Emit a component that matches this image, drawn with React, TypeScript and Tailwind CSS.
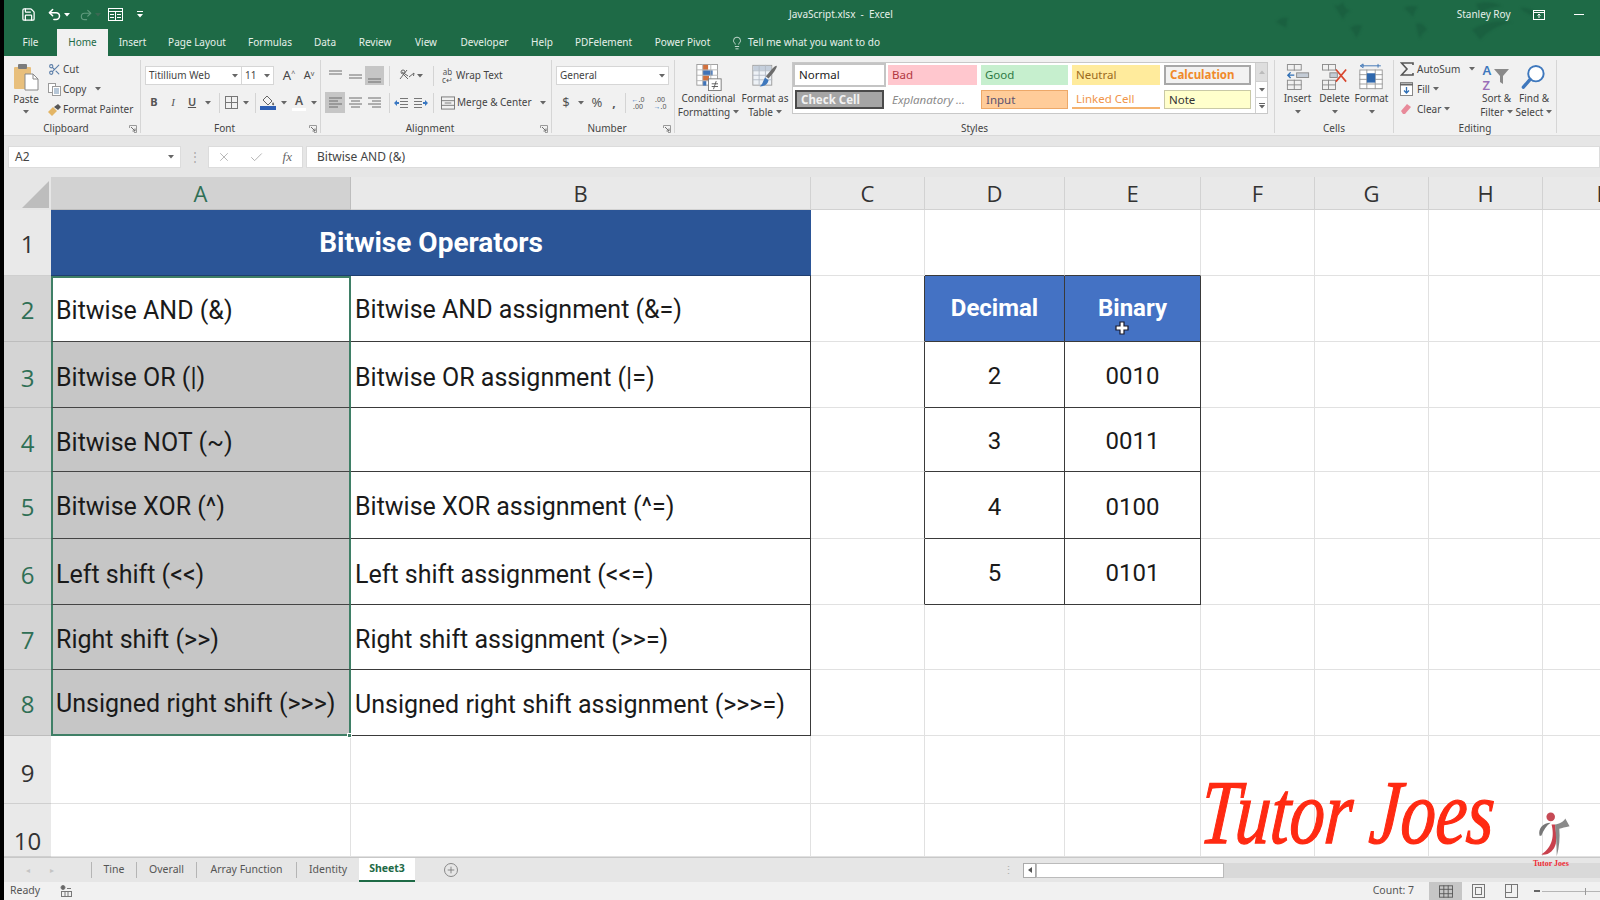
import React from "react";
import { Save, Undo2, Redo2, Scissors, Lightbulb, X, Check, Plus } from "lucide-react";

const Caret = ({ className = "" }: { className?: string }) => (
  <svg width="6" height="4" viewBox="0 0 6 4" className={`shrink-0 ${className}`}><path d="M0 0h6L3 3.5z" fill="#666" /></svg>
);

const Lines = ({ kind, w = 13 }: { kind: "l" | "c" | "r" | "t" | "m" | "b"; w?: number }) => {
  const ys = kind === "t" ? [2, 5] : kind === "m" ? [6, 9] : kind === "b" ? [10, 13] : [2, 5, 8, 11];
  return (
    <svg width={w} height="14" viewBox="0 0 13 14">
      {ys.map((y, i) => {
        const short = i % 2 === 1 && ys.length === 4;
        const x1 = kind === "r" && short ? 4 : kind === "c" && short ? 2 : 0;
        const x2 = kind === "l" && short ? 9 : kind === "c" && short ? 11 : 13;
        return <line key={y} x1={x1} x2={x2} y1={y} y2={y} stroke="#6d6d6d" strokeWidth="1" />;
      })}
    </svg>
  );
};

const Launcher = () => (
  <svg width="8" height="8" viewBox="0 0 8 8" className="shrink-0"><path d="M.5 3V.5H7.5V7.5H5" fill="none" stroke="#9a9a9a" /><path d="M2 2l4 4M6 3.5V6H3.5" fill="none" stroke="#6f6f6f" /></svg>
);

const Group = ({ w, label, launcher, children }: { w: string; label: string; launcher?: boolean; children: React.ReactNode }) => (
  <div className={`${w} h-[73px] shrink-0 border-r border-[#d6d6d6] flex flex-col`}>
    <div className="h-[63px] shrink-0">{children}</div>
    <div className={`h-[10px] leading-[12px] text-[10px] text-[#444] flex items-center justify-center relative ${launcher ? "pr-[12px]" : ""}`}>
      {label}
      {launcher && <span className="absolute top-[2px] right-[3px]"><Launcher /></span>}
    </div>
  </div>
);

const Sep = ({ className = "" }: { className?: string }) => <div className={`w-px h-[20px] bg-[#d4d4d4] shrink-0 ${className}`} />;

const StyleCell = ({ className, children }: { className: string; children: React.ReactNode }) => (
  <div className={`flex items-center pl-[4px] text-[11.5px] whitespace-nowrap overflow-hidden ${className}`}>{children}</div>
);

const BigButton = ({ w, icon, l1, l2 }: { w: string; icon: React.ReactNode; l1: string; l2?: string }) => (
  <div className={`${w} shrink-0 flex flex-col items-center text-[10px] leading-[14px] text-[#444] pt-[3px]`}>
    <div className="h-[28px] flex items-center justify-center">{icon}</div>
    <div className="whitespace-nowrap">{l1}</div>
    <div className="whitespace-nowrap flex items-center gap-[3px] h-[14px]">{l2}<Caret /></div>
  </div>
);

const TitleLeaves = () => (
  <svg className="absolute left-[1272px] top-0 blur-[1px]" width="290" height="40" viewBox="0 0 290 40" fill="#1a6040">
    <path d="M0 22c4-4 7-5 12-4-2 5-1 7-2 10-3-3-6-3-10-6zM58 5c4 2 6 0 9-3 1 5 4 8 8 9-5 1-7 5-8 9-2-5-5-8-9-15zM74 28c4-3 8-4 12-2-2 4-2 7-6 12-1-4-3-7-6-10zM128 8c3-2 8-3 14-1-3 3-4 6-5 10-3-4-6-6-9-9zM140 24c5-2 8 1 11 6-4 2-6 5-7 9-2-5-3-10-4-15zM200 4c8-3 18-2 26 2-10 1-18 3-22 9-1-4-2-7-4-11zM196 30c12-8 26-10 40-8-14 3-24 9-32 18-2-4-5-7-8-10zM244 8c8-1 14 2 20 8-8 0-14-2-20-8z" />
  </svg>
);

const tabs: [string, string][] = [
  ["File", "w-[53px]"], ["Home", "w-[51px]"], ["Insert", "w-[49px]"], ["Page Layout", "w-[80px]"], ["Formulas", "w-[66px]"], ["Data", "w-[44px]"],
  ["Review", "w-[56px]"], ["View", "w-[46px]"], ["Developer", "w-[71px]"], ["Help", "w-[44px]"], ["PDFelement", "w-[79px]"], ["Power Pivot", "w-[79px]"],
];

const GridIcon = ({ active }: { active?: boolean }) => (
  <svg width="14" height="13" viewBox="0 0 16 14" fill="none" stroke={active ? "#555" : "#777"}><rect x=".5" y=".5" width="15" height="13" /><path d="M5.5 0v14M10.5 0v14M0 4.5h16M0 9.5h16" /></svg>
);

const TitleBar = () => (
  <div className="h-[56px] shrink-0 bg-[#1e6a46] relative text-[#e6f0ea]">
    <TitleLeaves />
    <div className="h-[29px] flex items-center relative">
      <div className="w-[17px]" />
      <Save size={15} strokeWidth={2} className="text-white" />
      <div className="w-[11px]" />
      <Undo2 size={15} strokeWidth={2.4} className="text-white" />
      <Caret className="ml-[2px] brightness-[3]" />
      <div className="w-[9px]" />
      <Redo2 size={14} className="text-[#5f9a7d]" />
      <Caret className="ml-[2px] opacity-40" />
      <div className="w-[7px]" />
      <svg width="15" height="13" viewBox="0 0 15 13" fill="none" stroke="#fff"><rect x=".5" y=".5" width="14" height="12" /><path d="M0 3.5h15M7.5 3.5v9M2 6.5h4M2 9.5h4M9 6.5h4M9 9.5h4" /></svg>
      <div className="w-[14px]" />
      <svg width="6" height="7" viewBox="0 0 6 7" fill="#fff"><path d="M0 0h6v1H0zM0 3h6L3 6.5z" /></svg>
      <div className="text-[10px] ml-[646px] whitespace-nowrap">JavaScript.xlsx&nbsp; - &nbsp;Excel</div>
      <div className="text-[10px] ml-[564px] whitespace-nowrap">Stanley Roy</div>
      <svg width="12" height="10" viewBox="0 0 12 10" fill="none" stroke="#fff" className="ml-[22px]"><rect x=".5" y=".5" width="11" height="9" /><path d="M1 2.5h10" /><path d="M6 8V4M4.5 5.5L6 4l1.500 1.500" /></svg>
      <div className="w-[10px] h-px bg-white ml-[29px]" />
    </div>
    <div className="h-[27px] flex items-stretch relative text-[10px]">
      {tabs.map(([t, w]) => (
        <div key={t} className={`${w} flex items-center justify-center ${t === "Home" ? "bg-[#f1f1f1] text-[#1e6a46]" : ""}`}>{t}</div>
      ))}
      <Lightbulb size={14} strokeWidth={1.4} className="self-center ml-[8px]" />
      <div className="self-center ml-[4px] whitespace-nowrap">Tell me what you want to do</div>
    </div>
  </div>
);

const Ribbon = () => (
  <div className="h-[80px] shrink-0 bg-[#f1f1f1] pt-[4px] flex text-[#444] border-b border-[#d9d9d9]">
    {/* Clipboard */}
    <Group w="w-[137px]" label="Clipboard" launcher>
      <div className="flex h-full">
        <div className="w-[44px] flex flex-col items-center text-[10px] leading-[14px] pt-[3px]">
          <svg width="26" height="28" viewBox="0 0 26 28">
            <rect x="1" y="4" width="17" height="22" rx="1" fill="#e8bf7c" />
            <rect x="5" y="1" width="9" height="5" rx="1" fill="#7c7c7c" />
            <path d="M12 11h8l5 5v11H12z" fill="#fff" stroke="#888" />
            <path d="M20 11v5h5" fill="none" stroke="#888" />
          </svg>
          <div className="mt-[1px]">Paste</div>
          <Caret className="mt-[4px]" />
        </div>
        <div className="text-[10px] -mt-[1px]">
          <div className="h-[20px] flex items-center"><span className="w-[15px] flex"><Scissors size={13} className="text-[#5b7ea8]" /></span>Cut</div>
          <div className="h-[20px] flex items-center">
            <span className="w-[15px] flex"><svg width="13" height="13" viewBox="0 0 13 13" fill="#fff" stroke="#9a9a9a"><rect x=".5" y=".5" width="7" height="9" /><rect x="4.500" y="3.500" width="8" height="9" /><path d="M6 6h5M6 8h5M6 10h5" stroke="#6f8fb0" /></svg></span>
            Copy<Caret className="ml-[9px]" />
          </div>
          <div className="h-[20px] flex items-center">
            <span className="w-[15px] flex"><svg width="14" height="13" viewBox="0 0 14 13"><path d="M0 9l5-5 4 4-5 5z" fill="#e3b565" /><path d="M6 4l4-3 3 3-3 3z" fill="#555" /></svg></span>
            Format Painter
          </div>
        </div>
      </div>
    </Group>
    {/* Font */}
    <Group w="w-[180px]" label="Font" launcher>
      <div className="pt-[6px] pl-[4px]">
        <div className="flex items-center h-[19px]">
          <div className="w-[97px] h-[19px] bg-white border border-[#d6d6d6] flex items-center justify-between px-[3px] text-[10px]">Titillium Web<Caret /></div>
          <div className="w-[32px] h-[19px] bg-white border border-l-0 border-[#d6d6d6] flex items-center justify-between px-[3px] text-[10px]">11<Caret /></div>
          <div className="w-[20px] ml-[5px] text-center text-[13px]">A<sup className="text-[7px] text-[#555]">^</sup></div>
          <div className="w-[20px] text-center text-[11px]">A<sup className="text-[7px] text-[#555]">v</sup></div>
        </div>
        <div className="flex items-center h-[21px] mt-[7px] text-[#555]">
          <div className="w-[18px] text-center text-[11px] font-bold">B</div>
          <div className="w-[20px] text-center text-[11px] italic font-['Liberation_Serif',serif]">I</div>
          <div className="w-[18px] text-center text-[11px] underline font-semibold">U</div>
          <div className="w-[14px] flex justify-center"><Caret /></div>
          <Sep className="ml-[4px]" />
          <div className="w-[19px] ml-[2px] flex justify-center"><svg width="13" height="13" viewBox="0 0 13 13" fill="none" stroke="#777"><rect x=".5" y=".5" width="12" height="12" /><path d="M6.500 0v13M0 6.500h13" /></svg></div>
          <div className="w-[10px] flex justify-center"><Caret /></div>
          <Sep className="ml-[4px]" />
          <div className="w-[18px] ml-[3px] flex flex-col items-center">
            <svg width="14" height="11" viewBox="0 0 14 11"><path d="M6 1l5 5-4 4-5-5z" fill="#f4f4f4" stroke="#666" /><path d="M12 7c1 1.500 1.500 2 1 3-1 .5-2 0-2-1z" fill="#666" /></svg>
            <div className="w-[16px] h-[4px] bg-[#2d5fb5]" />
          </div>
          <div className="w-[13px] flex justify-center"><Caret /></div>
          <div className="w-[18px] flex flex-col items-center leading-none">
            <span className="text-[12px] font-semibold leading-[12px]">A</span>
            <div className="w-[14px] h-[3px] bg-white mt-[1px]" />
          </div>
          <div className="w-[12px] flex justify-center"><Caret /></div>
        </div>
      </div>
    </Group>
    {/* Alignment */}
    <Group w="w-[231px]" label="Alignment" launcher>
      <div className="pt-[6px] pl-[4px]">
        <div className="flex items-center h-[19px]">
          <div className="w-[20px] h-[19px] flex items-center justify-center"><Lines kind="t" /></div>
          <div className="w-[20px] h-[19px] flex items-center justify-center"><Lines kind="m" /></div>
          <div className="w-[19px] h-[19px] flex items-center justify-center bg-[#c6c6c6]"><Lines kind="b" /></div>
          <Sep className="ml-[5px]" />
          <div className="w-[22px] ml-[5px] flex justify-center">
            <svg width="17" height="15" viewBox="0 0 17 15" fill="none" stroke="#666"><path d="M2 11L9 2M4 4l6 4M6 7l4 4" /><circle cx="5" cy="4" r="2" /><path d="M11 9l5-4M16 5l-.5 3" /></svg>
          </div>
          <Caret />
          <Sep className="ml-[10px]" />
          <div className="w-[13px] ml-[7px] mr-[2px] text-[8px] leading-[8px] text-center text-[#555]">ab<br />c↵</div>
          <div className="text-[10px] whitespace-nowrap">Wrap Text</div>
        </div>
        <div className="flex items-center h-[21px] mt-[7px]">
          <div className="w-[20px] h-[21px] flex items-center justify-center bg-[#c6c6c6]"><Lines kind="l" /></div>
          <div className="w-[20px] h-[21px] flex items-center justify-center"><Lines kind="c" /></div>
          <div className="w-[19px] h-[21px] flex items-center justify-center"><Lines kind="r" /></div>
          <Sep className="ml-[5px]" />
          <div className="w-[18px] ml-[2px] flex justify-center"><svg width="14" height="12" viewBox="0 0 14 12" fill="none"><path d="M6 1.500h8M6 4.500h8M6 7.500h8M6 10.500h8" stroke="#777" /><path d="M0 6l3-3v2h2v2H3v2z" fill="#3a78c2" /></svg></div>
          <div className="w-[18px] ml-[2px] flex justify-center"><svg width="14" height="12" viewBox="0 0 14 12" fill="none"><path d="M0 1.500h8M0 4.500h8M0 7.500h8M0 10.500h8" stroke="#777" /><path d="M14 6l-3-3v2H9v2h2v2z" fill="#3a78c2" /></svg></div>
          <Sep className="ml-[3px]" />
          <div className="w-[14px] ml-[7px] flex justify-center"><svg width="14" height="14" viewBox="0 0 15 14" fill="none" stroke="#777"><rect x=".5" y=".5" width="14" height="13" /><path d="M0 4.500h15M0 9.500h15M4 7h7" /></svg></div>
          <div className="text-[10px] ml-[2px] whitespace-nowrap">Merge &amp; Center</div>
          <Caret className="ml-[8px]" />
        </div>
      </div>
    </Group>
    {/* Number */}
    <Group w="w-[123px]" label="Number" launcher>
      <div className="pt-[6px] pl-[4px]">
        <div className="w-[113px] h-[19px] bg-white border border-[#d6d6d6] flex items-center justify-between px-[3px] text-[10px]">General<Caret /></div>
        <div className="flex items-center h-[21px] mt-[7px] text-[#555]">
          <div className="w-[18px] ml-[1px] text-center text-[13px]">$</div>
          <div className="w-[12px] flex justify-center"><Caret /></div>
          <div className="w-[20px] text-center text-[13px]">%</div>
          <div className="w-[14px] text-center text-[12px] font-bold leading-[10px]">,</div>
          <Sep className="ml-[4px]" />
          <div className="w-[18px] ml-[3px] text-[7px] leading-[7px] text-center"><span className="text-[#3a78c2]">←</span>.0<br />.00</div>
          <div className="w-[18px] ml-[4px] text-[7px] leading-[7px] text-center">.00<br /><span className="text-[#3a78c2]">→</span>.0</div>
        </div>
      </div>
    </Group>
    {/* Styles */}
    <Group w="w-[600px]" label="Styles">
      <div className="flex h-full pl-[4px]">
        <BigButton
          w="w-[59px]"
          l1="Conditional"
          l2="Formatting"
          icon={
            <svg width="26" height="27" viewBox="0 0 28 30">
              <rect x=".5" y=".5" width="23" height="23" fill="#fff" stroke="#999" />
              <rect x="7" y="1" width="6" height="6" fill="#d2713d" />
              <rect x="7" y="7" width="11" height="6" fill="#3f73b8" />
              <rect x="7" y="13" width="7" height="6" fill="#d2713d" />
              <rect x="7" y="19" width="4" height="5" fill="#3f73b8" />
              <path d="M0 6.500h24M0 12.500h24M0 18.500h24M7 0v24M16 0v24" stroke="#b5b5b5" fill="none" />
              <rect x="13.500" y="16.500" width="14" height="13" fill="#fff" stroke="#777" />
              <path d="M17 22h7M17 25h7M22 19l-3 9" stroke="#555" fill="none" />
            </svg>
          }
        />
        <BigButton
          w="w-[54px]"
          l1="Format as"
          l2="Table"
          icon={
            <svg width="26" height="27" viewBox="0 0 28 30">
              <rect x=".5" y="1.500" width="21" height="22" fill="#eef2f7" stroke="#999" />
              <rect x="1" y="2" width="20" height="5" fill="#c5cfdc" />
              <path d="M0 7.500h22M0 12.500h22M0 17.500h22M7.500 1v22M14.500 1v22" stroke="#b3bac4" fill="none" />
              <path d="M27 2c1 2-5 10-9 14l-3-2c4-5 9-12 12-12z" fill="#6c6c6c" />
              <path d="M14 15l4 3c-1 4-4 7-10 7 3-2 4-6 6-10z" fill="#3f78bd" />
            </svg>
          }
        />
        <div className="w-[476px] h-[52px] mt-[2px] bg-white border border-[#c8c8c8] flex shrink-0">
          <div className="flex-1 grid grid-cols-[89px_89px_87px_88px_87px] grid-rows-[20px_19px] gap-x-[4px] gap-y-[5px] pt-[2px] pl-[2px]">
            <StyleCell className="bg-white outline-2 outline-[#c4c4c4] text-[#222]">Normal</StyleCell>
            <StyleCell className="bg-[#ffc7ce] text-[#b2383f]">Bad</StyleCell>
            <StyleCell className="bg-[#c6efce] text-[#2f7a45]">Good</StyleCell>
            <StyleCell className="bg-[#ffeb9c] text-[#9c6a1c]">Neutral</StyleCell>
            <StyleCell className="bg-[#f2f2f2] border-2 border-[#a8a8a8] font-bold text-[#f08a2a]">Calculation</StyleCell>
            <StyleCell className="bg-[#a5a5a5] border-2 border-[#4a4a4a] font-bold text-[#f2f2f2]">Check Cell</StyleCell>
            <StyleCell className="italic text-[#8a8a8a]">Explanatory ...</StyleCell>
            <StyleCell className="bg-[#ffcc99] border border-[#eda868] text-[#5b5270]">Input</StyleCell>
            <StyleCell className="border-b-2 border-[#f5b36f] text-[#f0954a]">Linked Cell</StyleCell>
            <StyleCell className="bg-[#ffffcc] border border-[#c9c9a6] text-[#333]">Note</StyleCell>
          </div>
          <div className="w-[12px] border-l border-[#d0d0d0] flex flex-col text-[#777]">
            <div className="h-[18px] bg-[#dedede] flex items-center justify-center"><svg width="6" height="4" viewBox="0 0 6 4"><path d="M0 4h6L3 .5z" fill="#bbb" /></svg></div>
            <div className="h-[17px] border-b border-t border-[#d0d0d0] flex items-center justify-center"><Caret /></div>
            <div className="flex-1 flex flex-col items-center justify-center gap-[1px]"><div className="w-[6px] h-px bg-[#666]" /><Caret /></div>
          </div>
        </div>
      </div>
    </Group>
    {/* Cells */}
    <Group w="w-[119px]" label="Cells">
      <div className="flex pl-[4px]">
        <BigButton w="w-[37px]" l1="Insert" icon={
          <svg width="24" height="26" viewBox="0 0 26 28" fill="none" stroke="#8a8a8a"><rect x="1.500" y=".5" width="15" height="6" /><path d="M9 0v7" /><rect x="1.500" y="17.500" width="15" height="10" /><path d="M9 17v11M1 22.500h16" /><rect x="11.500" y="9.500" width="13" height="5" fill="#c4ccd6" /><path d="M9 12H2M5 9l-3 3 3 3" stroke="#2f6fb5" strokeWidth="1.500" /></svg>
        } />
        <BigButton w="w-[37px]" l1="Delete" icon={
          <svg width="26" height="26" viewBox="0 0 28 28" fill="none" stroke="#8a8a8a"><rect x=".5" y=".5" width="14" height="6" /><path d="M7 0v7" /><rect x=".5" y="17.500" width="14" height="10" /><path d="M7 17v11M0 22.500h15" /><rect x="8.500" y="9.500" width="8" height="5" fill="#c4ccd6" /><path d="M15 6l11 13M26 6L15 19" stroke="#d8472f" strokeWidth="1.800" /></svg>
        } />
        <BigButton w="w-[37px]" l1="Format" icon={
          <svg width="25" height="28" viewBox="0 0 26 30" fill="none" stroke="#9a9a9a"><path d="M1 3h22M4 1v4M20 1v4M1 3l3-2M1 3l3 2" stroke="#3c74b5" /><rect x=".5" y="7.500" width="24" height="20" fill="#fff" /><path d="M8 7v21M17 7v21M0 12.500h25M0 17.500h25M0 22.500h25" /><rect x="8" y="11" width="9" height="10" fill="#2f68ad" stroke="none" /></svg>
        } />
      </div>
    </Group>
    {/* Editing */}
    <Group w="w-[163px]" label="Editing">
      <div className="flex h-full">
        <div className="w-[84px] shrink-0 text-[10px] -mt-[1px] pl-[6px]">
          <div className="h-[20px] flex items-center">
            <span className="w-[17px] flex"><svg width="14" height="14" viewBox="0 0 14 14" fill="none" stroke="#555" strokeWidth="1.600"><path d="M13 3V1H1.500L7 7l-5.500 6H13v-2" /></svg></span>
            AutoSum<Caret className="ml-[9px]" />
          </div>
          <div className="h-[20px] flex items-center">
            <span className="w-[17px] flex"><svg width="13" height="14" viewBox="0 0 13 14" fill="#fff" stroke="#888"><rect x=".5" y=".5" width="12" height="13" /><path d="M0 2.500h13" strokeWidth="2" stroke="#666" /><path d="M6.500 5v6M4 8.500l2.500 2.500L9 8.500" stroke="#2f6fb5" fill="none" strokeWidth="1.300" /></svg></span>
            Fill<Caret className="ml-[3px]" />
          </div>
          <div className="h-[20px] flex items-center">
            <span className="w-[17px] flex"><svg width="12" height="12" viewBox="0 0 12 12"><path d="M1 8l6-7 4 3-6 7H3z" fill="#e88a9a" /></svg></span>
            Clear<Caret className="ml-[3px]" />
          </div>
        </div>
        <BigButton w="w-[37px]" l1="Sort &" l2="Filter" icon={
          <div className="w-[28px] h-[28px] flex">
            <div className="w-[11px] flex flex-col pt-[1px] gap-[3px] text-[13px] leading-[12px] font-semibold">
              <span className="text-[#3f78bd]">A</span>
              <span className="text-[#9a6fb8]">Z</span>
            </div>
            <svg width="17" height="28" viewBox="12 0 17 28"><path d="M12 6h15l-6 7v8l-3-2v-6z" fill="#8a8a8a" /></svg>
          </div>
        } />
        <BigButton w="w-[38px]" l1="Find &" l2="Select" icon={
          <svg width="26" height="27" viewBox="0 0 26 28" fill="none"><circle cx="15" cy="10" r="8" stroke="#3f78bd" strokeWidth="2" fill="#fff" /><path d="M9 16l-7 8" stroke="#3f78bd" strokeWidth="3.500" strokeLinecap="round" /></svg>
        } />
      </div>
    </Group>
  </div>
);

const FormulaBar = () => (
  <div className="h-[41px] shrink-0 bg-[#e6e6e6] flex pt-[10px] text-[12px] text-[#444]">
    <div className="w-[173px] h-[22px] ml-[4px] bg-white border border-[#dcdcdc] flex items-center justify-between px-[6px]">A2<Caret /></div>
    <div className="w-[27px] flex justify-center items-center h-[22px] text-[#aaa] leading-[6px]">⋮</div>
    <div className="w-[95px] h-[22px] bg-white border border-[#dcdcdc] flex items-center justify-between pl-[8px] pr-[10px] text-[#999]">
      <X size={14} strokeWidth={1.2} /><Check size={15} strokeWidth={1.2} /><span className="italic font-['Liberation_Serif',serif] text-[#666] text-[13px]">fx</span>
    </div>
    <div className="flex-1 h-[22px] ml-[3px] bg-white border border-[#dcdcdc] flex items-center pl-[10px]">Bitwise AND (&amp;)</div>
  </div>
);

const rows: { n: number; a?: string; b?: string; d?: string; e?: string; pad: string; headPad: string }[] = [
  { n: 2, a: "Bitwise AND (&)", b: "Bitwise AND assignment (&=)", d: "Decimal", e: "Binary", pad: "pt-[2px]", headPad: "pt-[2px]" },
  { n: 3, a: "Bitwise OR (|)", b: "Bitwise OR assignment (|=)", d: "2", e: "0010", pad: "pt-[6px]", headPad: "pt-[6px]" },
  { n: 4, a: "Bitwise NOT (~)", d: "3", e: "0011", pad: "pt-[6px]", headPad: "pt-[6px]" },
  { n: 5, a: "Bitwise XOR (^)", b: "Bitwise XOR assignment (^=)", d: "4", e: "0100", pad: "pt-[3px]", headPad: "pt-[3px]" },
  { n: 6, a: "Left shift (<<)", b: "Left shift assignment (<<=)", d: "5", e: "0101", pad: "pt-[6px]", headPad: "pt-[7px]" },
  { n: 7, a: "Right shift (>>)", b: "Right shift assignment (>>=)", pad: "pt-[6px]", headPad: "pt-[5px]" },
  { n: 8, a: "Unsigned right shift (>>>)", b: "Unsigned right shift assignment (>>>=)", pad: "pt-[4px]", headPad: "pt-[3px]" },
  { n: 9, pad: "", headPad: "pt-[6px]" },
  { n: 10, pad: "", headPad: "" },
];

const blank = "border-r border-b border-[#e1e1e1]";
const dark = "border-[#3a3a3a]";

const RowHead = ({ n, sel, pad }: { n: number; sel?: boolean; pad: string }) => (
  <div className={`flex justify-center text-[24px] border-b font-['Open_Sans',sans-serif] ${pad} ${n === 10 ? "items-end leading-[30px]" : "items-center"} ${sel ? "bg-[#d4d4d4] text-[#2f6f55] border-[#bdbdbd]" : "bg-[#e9e9e9] text-[#333] border-[#cfcfcf]"}`}>{n}</div>
);

const Sheet = () => (
  <div className="grid grid-cols-[47px_300px_460px_114px_140px_136px_114px_114px_114px_114px] grid-rows-[33px_66px_66px_66px_64px_67px_66px_65px_66px_68px_53px] shrink-0 font-['Roboto',sans-serif] text-[#1a1a1a] overflow-hidden">
    <div className="bg-[#e6e6e6] flex items-end justify-end pr-[2px] pb-[2px]">
      <svg width="27" height="27" viewBox="0 0 27 27"><path d="M27 0v27H0z" fill="#bdbdbd" /></svg>
    </div>
    {["A", "B", "C", "D", "E", "F", "G", "H", "I"].map((c) => (
      <div key={c} className={`flex items-center justify-center pt-[1px] text-[22px] border-r border-b ${c === "A" ? "bg-[#d2d2d2] text-[#2f6f55] border-[#bdbdbd]" : "bg-[#e9e9e9] text-[#333] border-[#d2d2d2]"} font-['Open_Sans',sans-serif]`}>{c}</div>
    ))}
    <RowHead n={1} pad="pt-[3px]" />
    <div className="col-span-2 bg-[#2b5597] flex items-center justify-center text-white font-bold text-[28px] border-b border-[#1f3e70]">Bitwise Operators</div>
    <div className={blank} />
    <div className={`border-r border-b border-r-[#e1e1e1] ${dark}`} />
    <div className={`border-r border-b border-r-[#e1e1e1] ${dark}`} />
    <div className={blank} /><div className={blank} /><div className={blank} /><div className={blank} />
    {rows.map((r) => {
      const inTable = r.n >= 2 && r.n <= 8;
      const deTable = r.n >= 2 && r.n <= 6;
      const head = r.n === 2;
      return (
        <React.Fragment key={r.n}>
          <RowHead n={r.n} sel={inTable} pad={r.headPad} />
          <div className={inTable
            ? `flex items-center pl-[3px] ${r.pad} text-[25px] whitespace-nowrap border-x-2 border-x-[#3f7f66] border-b ${r.n === 8 ? "border-b-2 border-b-[#3f7f66]" : "border-b-[#444]"} ${r.n === 2 ? "bg-white border-t-2 border-t-[#3f7f66]" : "bg-[#c6c6c6]"}`
            : blank}>{r.a}</div>
          <div className={`relative ${inTable ? `flex items-center pl-[4px] ${r.pad} text-[25px] whitespace-nowrap border-r border-b ${dark}` : blank}`}>
            {r.b}
            {r.n === 8 && <span className="absolute -left-[4px] -bottom-[3px] w-[5px] h-[5px] bg-[#3f7f66] border border-white" />}
          </div>
          <div className={`border-b border-b-[#e1e1e1] border-r ${deTable ? "border-r-[#3a3a3a]" : "border-r-[#e1e1e1]"}`} />
          {(["d", "e"] as const).map((k) => (
            <div key={k} className={deTable
              ? `flex items-center justify-center border-r border-b ${dark} ${head ? "bg-[#4472c4] text-white font-bold text-[24px] pb-[2px]" : "text-[24px] pt-[3px]"}`
              : blank}>{r[k]}</div>
          ))}
          <div className={blank} /><div className={blank} /><div className={blank} /><div className={blank} />
        </React.Fragment>
      );
    })}
  </div>
);

const TabBar = () => (
  <div className="h-[25px] shrink-0 bg-[#e6e6e6] border-t border-[#c8c8c8] flex items-center text-[10.5px] text-[#555]">
    <div className="w-[87px] flex pl-[22px] gap-[20px] text-[#c4c4c4] text-[8px]"><span>◂</span><span>▸</span></div>
    {[["Tine", "w-[45px]"], ["Overall", "w-[60px]"], ["Array Function", "w-[100px]"], ["Identity", "w-[63px]"]].map(([t, w]) => (
      <div key={t} className={`${w} h-[16px] flex items-center justify-center border-l border-[#b5b5b5]`}>{t}</div>
    ))}
    <div className="w-[56px] h-[24px] bg-white border-b-2 border-[#1e6a46] text-[#1e6a46] font-bold flex items-center justify-center">Sheet3</div>
    <div className="ml-[29px] w-[14px] h-[14px] rounded-full border border-[#888] flex items-center justify-center"><Plus size={10} className="text-[#777]" /></div>
    <div className="ml-[545px] text-[#b0b0b0] leading-none">⋮</div>
    <div className="ml-[9px] flex-1 h-[15px] bg-[#d9d9d9] flex">
      <div className="w-[13px] h-[15px] bg-white border border-[#aaa] flex items-center justify-center"><svg width="4" height="6" viewBox="0 0 4 6"><path d="M4 0v6L0 3z" fill="#555" /></svg></div>
      <div className="w-[188px] h-[15px] bg-white border border-[#bbb]" />
    </div>
  </div>
);

const StatusBar = () => (
  <div className="flex-1 bg-[#f1f1f1] flex items-center text-[10.5px] text-[#555]">
    <div className="ml-[6px]">Ready</div>
    <svg width="12" height="12" viewBox="0 0 12 12" className="ml-[20px]" fill="none" stroke="#777"><circle cx="3" cy="2.500" r="2" fill="#666" /><rect x="1.500" y="6.500" width="10" height="5" /><path d="M5 6v6M8 6v6M7 3.500h4" /></svg>
    <div className="ml-[auto]">Count: 7</div>
    <div className="ml-[15px] w-[33px] h-full bg-[#c6c6c6] flex items-center justify-center"><GridIcon active /></div>
    <div className="w-[33px] flex justify-center"><svg width="13" height="14" viewBox="0 0 13 14" fill="none" stroke="#777"><rect x=".5" y=".5" width="12" height="13" /><rect x="3.500" y="3.500" width="6" height="7" /></svg></div>
    <div className="w-[33px] flex justify-center"><svg width="13" height="14" viewBox="0 0 13 14" fill="none" stroke="#777"><rect x=".5" y=".5" width="12" height="13" /><path d="M0 8.500h7M6.500 0v9" /></svg></div>
    <div className="w-[6px] h-[2px] bg-[#666] ml-[6px]" />
    <div className="w-[58px] h-px bg-[#b5b5b5] ml-[2px] relative"><div className="absolute left-[43px] -top-[3px] w-px h-[7px] bg-[#999]" /></div>
  </div>
);

const Watermark = () => (
  <>
    <div className="absolute left-[1201px] top-[768px] text-[#ff2a12] font-['Liberation_Serif',serif] italic text-[70px] leading-[90px] whitespace-nowrap -skew-x-6 scale-y-[1.3] [-webkit-text-stroke:1px_#ff2a12] pointer-events-none">Tutor Joes</div>
    <svg className="absolute left-[1537px] top-[810px] pointer-events-none" width="36" height="48" viewBox="0 0 38 56">
      <circle cx="14" cy="8" r="5" fill="#c64a55" />
      <path d="M15 17c3 12 2 26-12 35 9 1 15-5 17-13 1-8 0-16-1-22z" fill="#c9414d" />
      <path d="M1 30C-1 22 5 15 14 15c-5 3-8 8-11 15z" fill="#777" />
      <path d="M19 17c5-1 10-3 12-7l5 9c-5 1-9 2-12 3 1 10 0 22-3 32 0-12-1-25-2-37z" fill="#8a8a8a" />
    </svg>
    <div className="absolute left-[1533px] top-[859px] text-[8px] leading-[10px] font-bold text-[#ee2b35] font-['Liberation_Serif',serif] whitespace-nowrap">Tutor Joes</div>
  </>
);

const Cursor = () => (
  <svg className="absolute left-[1115px] top-[321px]" width="15" height="15" viewBox="0 0 15 15">
    <path d="M5 1h4v4h4v4H9v4H5V9H1V5h4z" fill="#fff" stroke="#1a1a2a" strokeWidth="1.200" />
  </svg>
);

export default function App() {
  return (
    <div className="w-[1600px] h-[900px] overflow-hidden flex relative bg-white font-['Noto_Sans',sans-serif]">
      <div className="w-[4px] shrink-0 bg-black" />
      <div className="flex-1 min-w-0 flex flex-col">
        <TitleBar />
        <Ribbon />
        <FormulaBar />
        <Sheet />
        <TabBar />
        <StatusBar />
      </div>
      <Cursor />
      <Watermark />
    </div>
  );
}
